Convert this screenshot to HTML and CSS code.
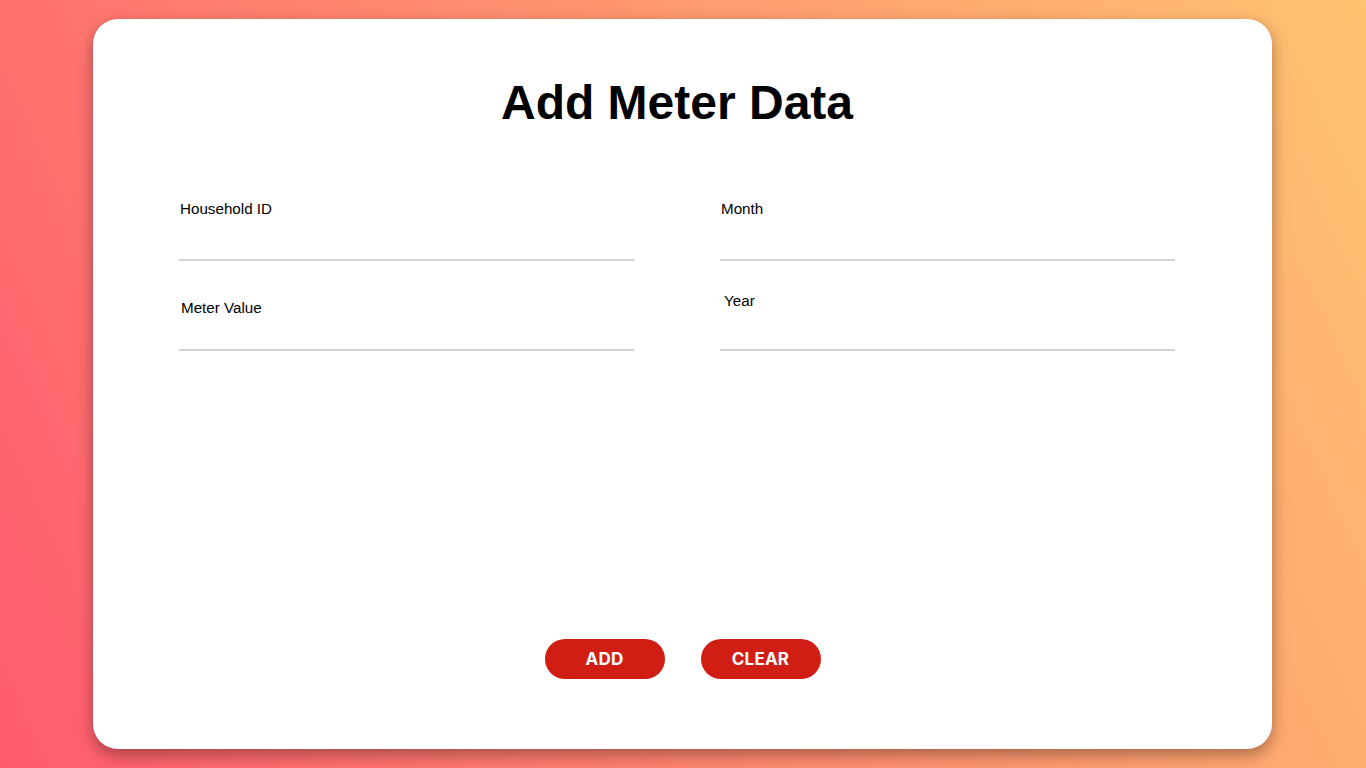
FILE: index.html
```html
<!DOCTYPE html>
<html lang="en">
<head>
<meta charset="utf-8">
<title>Add Meter Data</title>
<link rel="stylesheet" href="styles.css">
</head>
<body>
<main class="card">
  <h1 class="title">Add Meter Data</h1>
  <form class="form">
    <div class="grid">
      <div class="field">
        <label class="label" for="hid">Household ID</label>
        <input class="input" id="hid" type="text">
      </div>
      <div class="field">
        <label class="label" for="month">Month</label>
        <input class="input" id="month" type="text">
      </div>
      <div class="field">
        <label class="label label-meter" for="meter">Meter Value</label>
        <input class="input" id="meter" type="text">
      </div>
      <div class="field">
        <label class="label label-year" for="year">Year</label>
        <input class="input" id="year" type="text">
      </div>
    </div>
    <div class="actions">
      <button class="btn" type="button">ADD</button>
      <button class="btn" type="reset">CLEAR</button>
    </div>
  </form>
</main>
</body>
</html>
```

FILE: styles.css
```css
* { box-sizing: border-box; }

html, body {
  margin: 0;
  height: 100%;
}

body {
  min-height: 100vh;
  background: linear-gradient(65deg, #ff5b6e 0%, #ffc371 100%);
  display: flex;
  align-items: center;
  justify-content: center;
  padding-right: 1px;
  font-family: "Liberation Sans", Arial, sans-serif;
}

.card {
  width: 1179px;
  height: 730px;
  flex-shrink: 0;
  background: #fff;
  border-radius: 25px;
  box-shadow: 0 6px 16px rgba(0, 0, 0, 0.35);
  padding: 56px 97px 70px 86px;
  display: flex;
  flex-direction: column;
}

.title {
  margin: 0;
  font-size: 48px;
  line-height: 56px;
  font-weight: 700;
  text-align: center;
  color: #000;
}

.form {
  flex: 1;
  display: flex;
  flex-direction: column;
  margin-top: 69px;
}

.grid {
  display: grid;
  grid-template-columns: 455px 455px;
  column-gap: 86px;
  row-gap: 29px;
}

.field {
  height: 61px;
  display: flex;
  flex-direction: column;
}

.label {
  font-size: 15.2px;
  line-height: 18px;
  color: #000;
  padding-left: 1px;
}

.label-meter {
  margin-top: 9px;
  padding-left: 2px;
}

.label-year {
  margin-top: 2px;
  padding-left: 4px;
}

.input {
  margin-top: auto;
  border: none;
  border-bottom: 2px solid #d3d3d3;
  height: 30px;
  outline: none;
  background: transparent;
  font: inherit;
  padding: 0;
}

.actions {
  margin-top: auto;
  display: flex;
  justify-content: center;
  gap: 36px;
  padding-left: 11px;
}

.btn {
  width: 120px;
  height: 40px;
  border: none;
  border-radius: 20px;
  background: #d01e15;
  color: #fff;
  font-family: Inter, "Open Sans", sans-serif;
  font-weight: 700;
  font-size: 17px;
  letter-spacing: 0.2px;
  cursor: pointer;
}
```
